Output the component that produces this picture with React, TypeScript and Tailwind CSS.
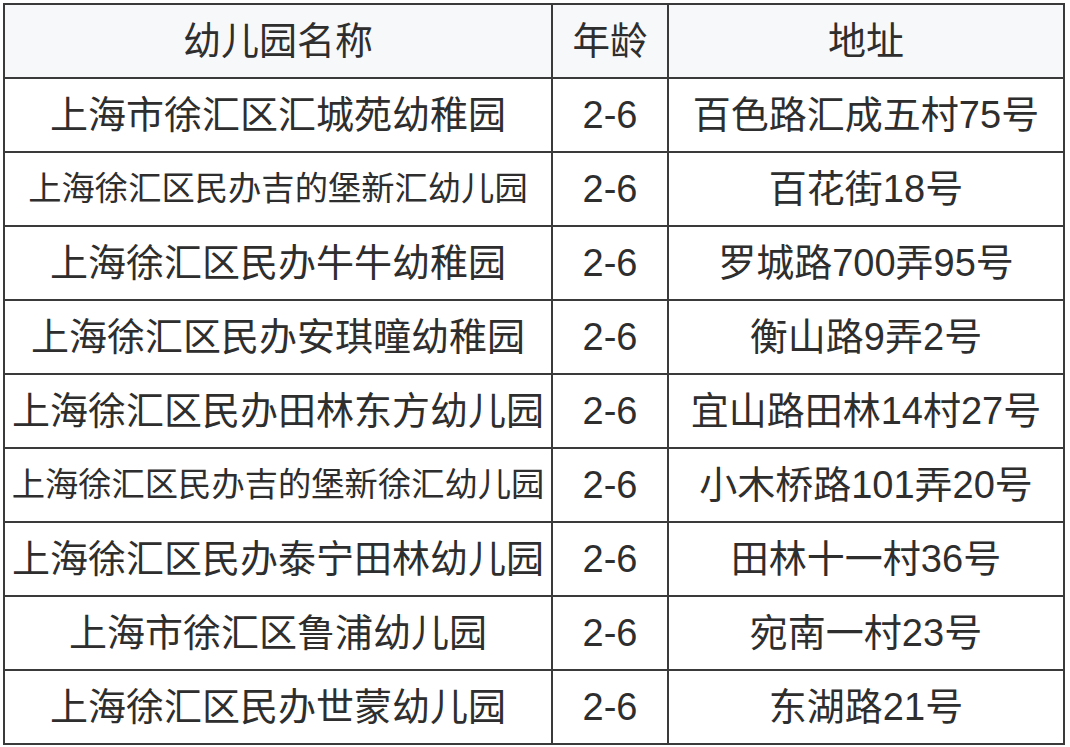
import React from "react";

const rows: { name: string; size: string; age: string; addr: string }[] = [
  { name: "上海市徐汇区汇城苑幼稚园", size: "text-[38px]", age: "2-6", addr: "百色路汇成五村75号" },
  { name: "上海徐汇区民办吉的堡新汇幼儿园", size: "text-[33.3px]", age: "2-6", addr: "百花街18号" },
  { name: "上海徐汇区民办牛牛幼稚园", size: "text-[38px]", age: "2-6", addr: "罗城路700弄95号" },
  { name: "上海徐汇区民办安琪曈幼稚园", size: "text-[38px]", age: "2-6", addr: "衡山路9弄2号" },
  { name: "上海徐汇区民办田林东方幼儿园", size: "text-[38px]", age: "2-6", addr: "宜山路田林14村27号" },
  { name: "上海徐汇区民办吉的堡新徐汇幼儿园", size: "text-[33.3px]", age: "2-6", addr: "小木桥路101弄20号" },
  { name: "上海徐汇区民办泰宁田林幼儿园", size: "text-[38px]", age: "2-6", addr: "田林十一村36号" },
  { name: "上海市徐汇区鲁浦幼儿园", size: "text-[38px]", age: "2-6", addr: "宛南一村23号" },
  { name: "上海徐汇区民办世蒙幼儿园", size: "text-[38px]", age: "2-6", addr: "东湖路21号" },
];

const cell =
  "flex items-center justify-center h-[74px] border-r-2 border-b-2 border-[#3a3a3a] whitespace-nowrap";

export default function App() {
  return (
    <div className="w-[1070px] h-[747px] bg-white pt-[3px] pl-[3px] overflow-hidden">
      <div
        className="grid grid-cols-[548px_116px_396px] w-[1062px] border-l-2 border-t-2 border-[#3a3a3a] text-[#2e2e2e]"
        style={{ fontFamily: '"Liberation Sans", "Noto Sans CJK SC", sans-serif' }}
      >
        <div className={`${cell} bg-[#f7f8fa] text-[38px]`}>幼儿园名称</div>
        <div className={`${cell} bg-[#f7f8fa] text-[37.5px]`}>年龄</div>
        <div className={`${cell} bg-[#f7f8fa] text-[38px]`}>地址</div>
        {rows.map((r, i) => (
          <React.Fragment key={i}>
            <div className={`${cell} ${r.size}`}>
              <span className="shrink-0">{r.name}</span>
            </div>
            <div className={`${cell} text-[38px]`}>{r.age}</div>
            <div className={`${cell} text-[38px]`}>{r.addr}</div>
          </React.Fragment>
        ))}
      </div>
    </div>
  );
}
